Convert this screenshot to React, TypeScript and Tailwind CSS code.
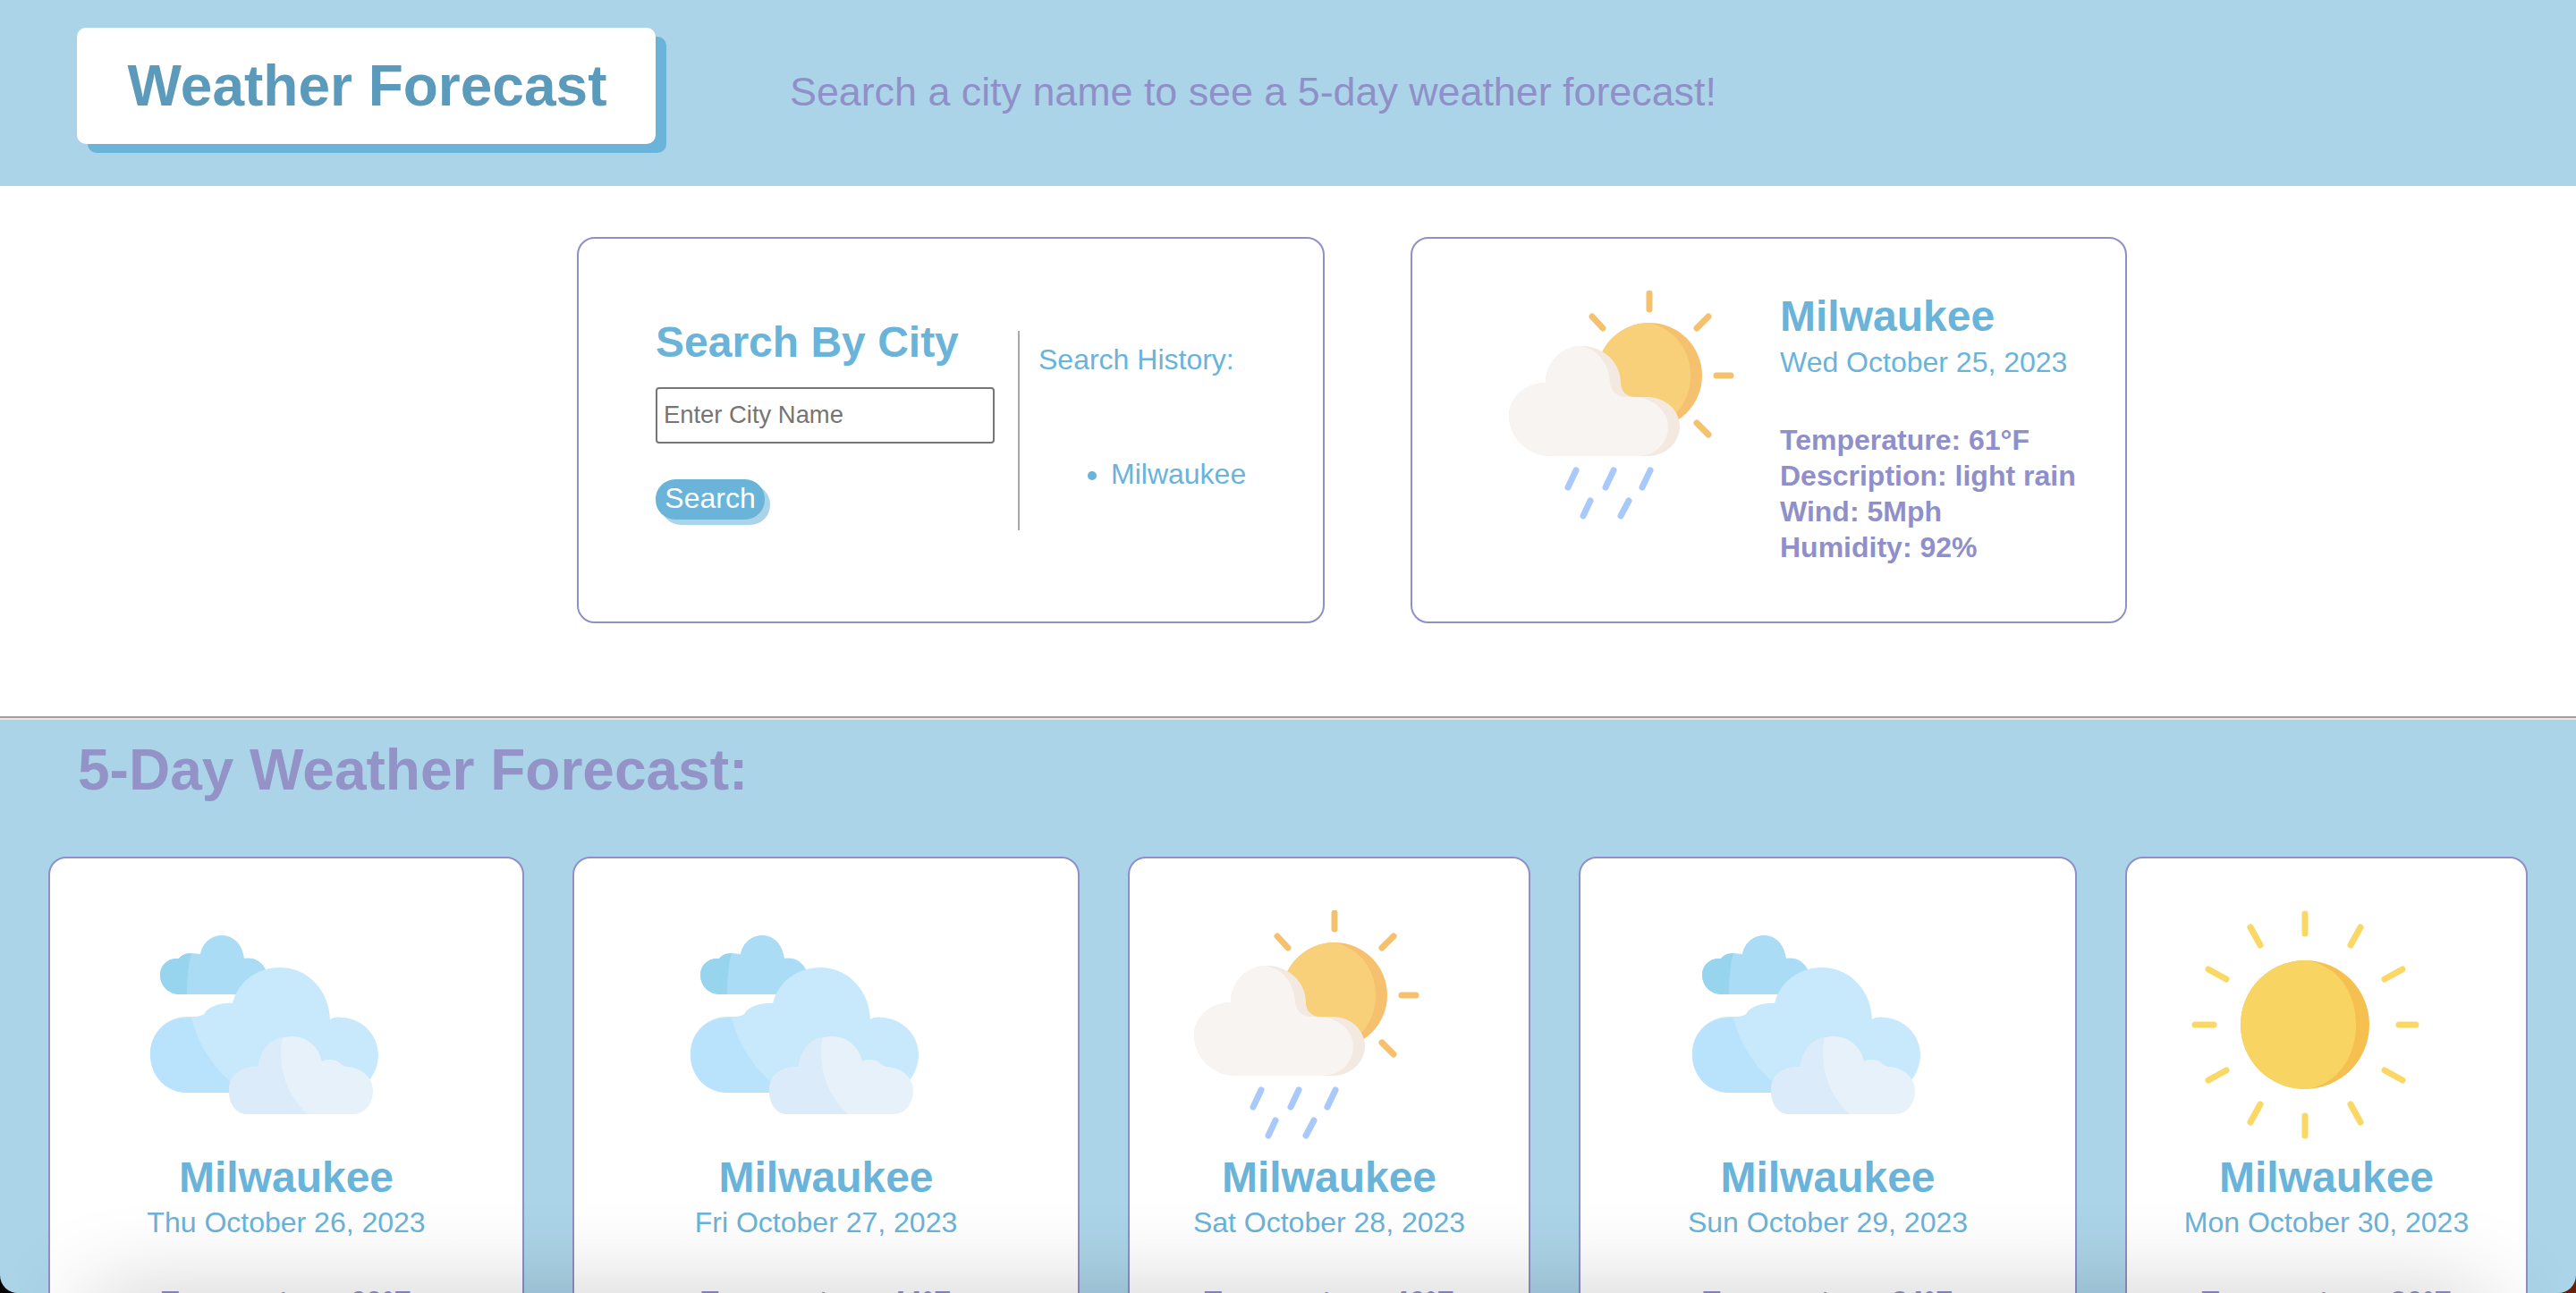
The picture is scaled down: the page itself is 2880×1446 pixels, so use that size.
const RainIcon = () => (
  <svg viewBox="0 0 256 256" className="w-[256px] h-[256px] shrink-0" fill="none" strokeLinecap="round">
    <circle cx="158" cy="95" r="59" fill="#f5c16e" />
    <path d="M158 36C190 44 204 70 204 95C204 120 190 146 158 154A59 59 0 0 1 158 36Z" fill="#f8d07a" />
    <g stroke="#f5c16e" strokeWidth="7">
      <path d="M158 3V21" />
      <path d="M211 42L224 29" />
      <path d="M94 29L106 42" />
      <path d="M233 95H249" />
      <path d="M211 148L224 161" />
    </g>
    <path d="M48 185C20 185 1 162 1 140C1 120 18 104 42 103C42 80 60 62 83 62C106 62 126 80 126 103C126 112 132 119 142 119L156 119C176 119 192 134 192 152C192 170 176 185 156 185Z" fill="#f3e9e0" />
    <path d="M48 185C20 185 1 162 1 140C1 120 18 104 42 103C42 80 60 62 80 62C100 64 113 82 114 103C115 112 122 119 132 119L145 119C165 122 179 136 179 152C179 170 165 185 145 185Z" fill="#f7f4f2" />
    <g stroke="#a9c9fb" strokeWidth="7">
      <path d="M76 201L67 220" />
      <path d="M118 201L109 220" />
      <path d="M159 201L150 220" />
      <path d="M92 235L84 252" />
      <path d="M135 235L126 252" />
    </g>
  </svg>
)

const CloudsIcon = () => (
  <svg viewBox="0 0 256 256" className="w-[256px] h-[256px] shrink-0">
    <path d="M33 94C20 94 11 84 11 72C11 61 20 53 32 54C35 50 40 48 46 48L56 49C58 37 68 28 80 28C93 28 103 38 105 54C116 52 124 57 129 66L115 94Z" fill="#abdcf5" />
    <path d="M33 94C20 94 11 84 11 72C11 61 20 53 32 54C35 50 40 48 46 48C42 62 41 78 41 94Z" fill="#97d4ee" />
    <path d="M42 204C18 204 0 186 0 161C0 137 18 119 41 119C52 119 60 119 62 113C68 107 80 103 92 104C98 80 120 63 147 64C177 65 200 90 201 122C205 119 210 119 216 120C238 122 255 140 255 162C255 182 240 204 216 204Z" fill="#c8e9fc" />
    <path d="M42 204C18 204 0 186 0 161C0 137 18 119 46 120C52 146 68 172 88 190L100 204Z" fill="#b9e2fc" />
    <path d="M108 228C96 228 88 216 88 202C88 187 98 175 121 175C123 155 139 141 158 141C175 141 188 152 192 169C196 166 208 166 212 171C216 174 218 175 220 175C236 176 249 187 249 202C249 216 240 228 227 228Z" fill="#e6f1f9" />
    <path d="M108 228C96 228 88 216 88 202C88 187 98 175 121 175C123 155 134 144 148 142C142 170 150 205 176 228Z" fill="#dcebf9" />
  </svg>
)

const SunIcon = () => (
  <svg viewBox="0 0 256 256" className="w-[256px] h-[256px] shrink-0" fill="none" strokeLinecap="round">
    <circle cx="128" cy="128" r="72" fill="#f5c04f" />
    <path d="M128 56C164 60 185 92 185 128C185 164 164 196 128 200A72 72 0 0 1 128 56Z" fill="#f8d462" />
    <g stroke="#fbd765" strokeWidth="7">
      <path d="M128 4V26" />
      <path d="M128 230V252" />
      <path d="M5 128H26" />
      <path d="M233 128H252" />
      <path d="M67 19L78 39" />
      <path d="M190 19L179 39" />
      <path d="M67 237L78 217" />
      <path d="M190 237L179 217" />
      <path d="M20 66L40 77" />
      <path d="M237 66L217 77" />
      <path d="M20 190L40 179" />
      <path d="M237 190L217 179" />
    </g>
  </svg>
)

const forecast = [
  { width: 'w-[532px]', day: 'Thu October 26, 2023', temp: '60°F', desc: 'broken clouds', wind: '7Mph', hum: '78%', icon: <CloudsIcon /> },
  { width: 'w-[567px]', day: 'Fri October 27, 2023', temp: '44°F', desc: 'overcast clouds', wind: '9Mph', hum: '70%', icon: <CloudsIcon /> },
  { width: 'w-[450px]', day: 'Sat October 28, 2023', temp: '46°F', desc: 'light rain', wind: '6Mph', hum: '84%', icon: <RainIcon /> },
  { width: 'w-[557px]', day: 'Sun October 29, 2023', temp: '34°F', desc: 'broken clouds', wind: '8Mph', hum: '66%', icon: <CloudsIcon /> },
  { width: 'w-[450px]', day: 'Mon October 30, 2023', temp: '36°F', desc: 'clear sky', wind: '5Mph', hum: '58%', icon: <SunIcon /> },
]

export default function App() {
  return (
    <div className="relative h-screen overflow-hidden bg-white font-['Liberation_Sans',Arial,sans-serif]">
      <header className="flex h-[208px] items-start bg-[#acd4e8] pl-[86px]">
        <div className="mt-[31px] flex h-[130px] w-[647px] justify-center rounded-[10px] bg-white pt-[29px] pl-[2px] shadow-[12px_10px_0_#6ab3d9]">
          <h1 className="text-[64px] leading-[72px] font-bold text-[#5b9aba]">Weather Forecast</h1>
        </div>
        <p className="mt-[76px] ml-[150px] text-[44.8px] leading-[52px] text-[#9090c8]">
          Search a city name to see a 5-day weather forecast!
        </p>
      </header>

      <main className="flex h-[593px] gap-[96px] pt-[57px] pl-[645px]">
        <section className="flex h-[432px] w-[836px] rounded-[20px] border-2 border-[#8f8fc9] pl-[86px]">
          <div className="mt-[88px] w-[379px]">
            <h2 className="text-[48px] leading-[56px] font-bold text-[#6ab3d9]">Search By City</h2>
            <input
              placeholder="Enter City Name"
              className="mt-[22px] block h-[63px] w-[379px] rounded-[4px] border-2 border-[#767676] px-[7px] pb-[2px] text-[27.4px] placeholder:text-[#757575]"
            />
            <button className="mt-[40px] block h-[45px] w-[122px] rounded-[22px] bg-[#6ab3d9] pb-[3px] text-[32px] leading-[40px] text-white shadow-[6px_6px_0_#acd4e8]">
              Search
            </button>
          </div>
          <div className="mt-[103px] ml-[26px] h-[223px] w-[2px] bg-[#a8a8a8]" />
          <div className="mt-[115px] ml-[21px] text-[32px] leading-[40px] text-[#6ab3d9]">
            <h3>Search History:</h3>
            <ul className="mt-[88px] list-disc pl-[81px]">
              <li>Milwaukee</li>
            </ul>
          </div>
        </section>

        <section className="flex h-[432px] w-[801px] rounded-[20px] border-2 border-[#8f8fc9] pt-[58px] pl-[107px]">
          <RainIcon />
          <div className="mt-[1px] ml-[48px]">
            <h2 className="text-[48px] leading-[56px] font-bold text-[#6ab3d9]">Milwaukee</h2>
            <p className="mt-[3px] text-[32px] leading-[40px] text-[#6ab3d9]">Wed October 25, 2023</p>
            <div className="mt-[47px] text-[32px] leading-[40px] font-bold text-[#8f8fc9]">
              <p>Temperature: 61°F</p>
              <p>Description: light rain</p>
              <p>Wind: 5Mph</p>
              <p>Humidity: 92%</p>
            </div>
          </div>
        </section>
      </main>

      <div className="h-[4px] border-t-2 border-b-2 border-t-[#a0a0a0] border-b-[#e8e8e8]" />

      <section className="h-[641px] bg-[#acd4e8] pt-[20px]">
        <h2 className="pl-[87px] text-[64px] leading-[72px] font-bold text-[#9393c8]">5-Day Weather Forecast:</h2>
        <div className="mt-[61px] flex gap-[54px] pl-[54px]">
          {forecast.map((f) => (
            <article
              key={f.day}
              className={`flex h-[600px] shrink-0 flex-col items-center rounded-[20px] border-2 border-[#8f8fc9] bg-white pt-[58px] ${f.width}`}
            >
              <div className="mr-[48px]">{f.icon}</div>
              <h3 className="mt-[15px] text-[48px] leading-[56px] font-bold text-[#6ab3d9]">Milwaukee</h3>
              <p className="mt-[2px] text-[32px] leading-[40px] text-[#6ab3d9]">{f.day}</p>
              <div className="mt-[48px] text-center text-[32px] leading-[40px] font-bold text-[#8f8fc9]">
                <p>Temperature: {f.temp}</p>
                <p>Description: {f.desc}</p>
                <p>Wind: {f.wind}</p>
                <p>Humidity: {f.hum}</p>
              </div>
            </article>
          ))}
        </div>
      </section>

      {/* shadow from below the window edge */}
      <div className="pointer-events-none absolute top-[1462px] right-[100px] left-[100px] h-[60px] shadow-[0_0_110px_rgba(0,0,0,0.3)]" />

      {/* rounded window corners */}
      <div className="absolute bottom-0 left-0 h-[20px] w-[20px] bg-black">
        <div className="h-full w-full rounded-bl-[20px] bg-[#acd4e8]" />
      </div>
      <div className="absolute right-0 bottom-0 h-[20px] w-[20px] bg-[#6b1d0a]">
        <div className="h-full w-full rounded-br-[20px] bg-[#acd4e8]" />
      </div>
    </div>
  )
}
